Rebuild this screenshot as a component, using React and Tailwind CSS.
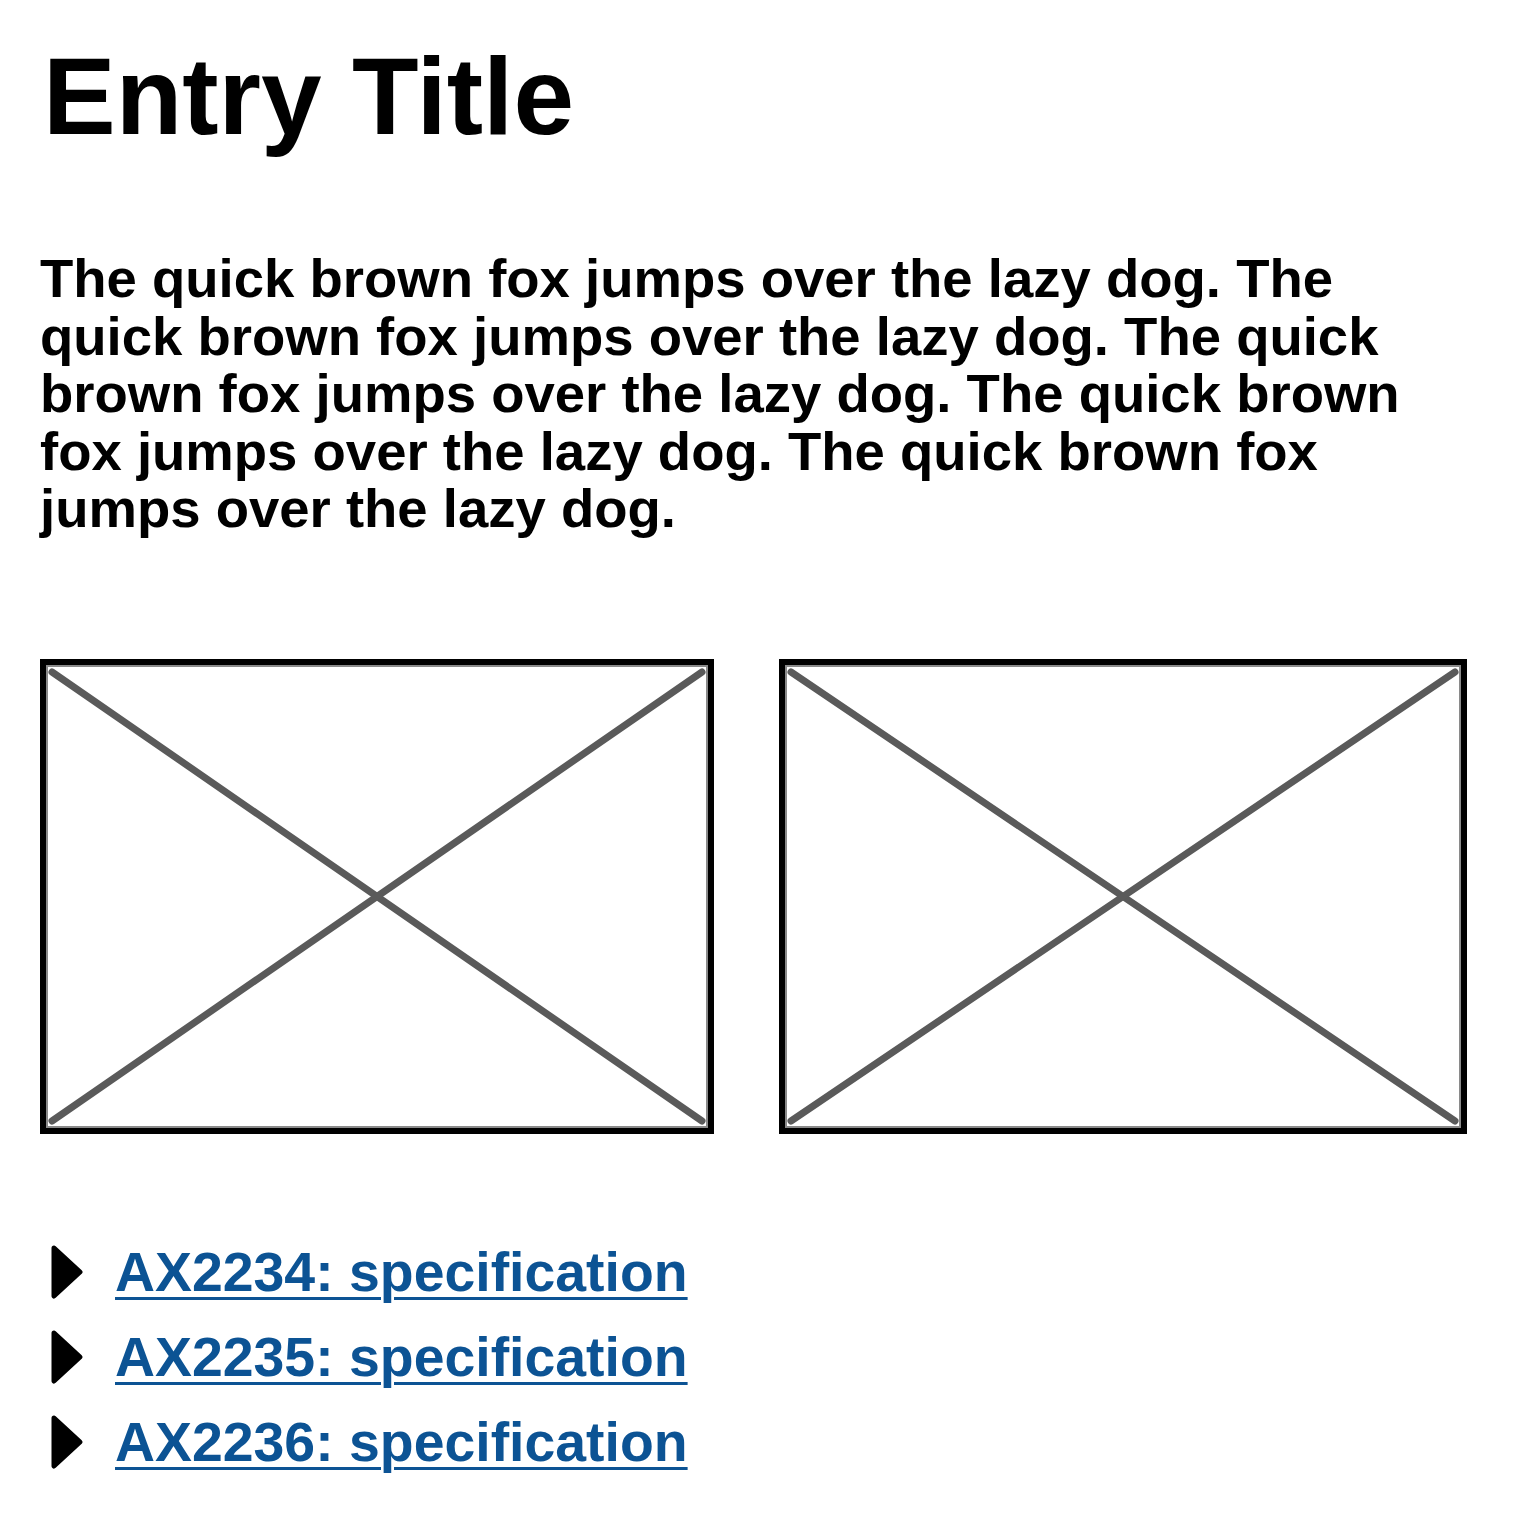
import React from "react";

function Placeholder({ w, h }) {
  return (
    <svg width={w} height={h} viewBox={`0 0 ${w} ${h}`} className="block shrink-0">
      <rect x="0" y="0" width={w} height={h} fill="#fff" />
      <line x1="12" y1="13" x2={w - 12} y2={h - 13} stroke="#5a5a5a" strokeWidth="7" strokeLinecap="round" />
      <line x1="12" y1={h - 13} x2={w - 12} y2="13" stroke="#5a5a5a" strokeWidth="7" strokeLinecap="round" />
      <rect x="7" y="7" width={w - 14} height={h - 14} fill="none" stroke="#8a8a8a" strokeWidth="2" />
      <rect x="3" y="3" width={w - 6} height={h - 6} fill="none" stroke="#000" strokeWidth="6" />
    </svg>
  );
}

function Tri() {
  return (
    <svg width="34" height="56" viewBox="0 0 34 56" className="block shrink-0">
      <path d="M4 4 L30 28 L4 52 Z" fill="#000" stroke="#000" strokeWidth="5" strokeLinejoin="round" />
    </svg>
  );
}

const items = ["AX2234: specification", "AX2235: specification", "AX2236: specification"];

export default function App() {
  return (
    <div className="bg-white min-h-[1524px] pl-[40px] pr-[59px] text-black" style={{ fontFamily: '"Liberation Sans", Arial, sans-serif' }}>
      <h1 className="pt-[42px] pl-[3px] text-[109px] leading-[108px] font-bold">Entry Title</h1>
      <p className="mt-[100px] text-[54.5px] leading-[57.5px] font-bold max-w-[1427px]">
        The quick brown fox jumps over the lazy dog. The quick brown fox jumps over the lazy dog. The quick brown fox jumps over the lazy dog. The quick brown fox jumps over the lazy dog. The quick brown fox jumps over the lazy dog.
      </p>
      <div className="mt-[121px] flex gap-[65px]">
        <Placeholder w={674} h={475} />
        <Placeholder w={688} h={475} />
      </div>
      <ul className="mt-[96px]">
        {items.map((t) => (
          <li key={t} className="flex items-center h-[85px] pl-[10px]">
            <Tri />
            <a href="#" className="ml-[31px] text-[55.4px] leading-[85px] font-bold text-[#0c5394] underline decoration-[3px] underline-offset-[6px]">
              {t}
            </a>
          </li>
        ))}
      </ul>
    </div>
  );
}
